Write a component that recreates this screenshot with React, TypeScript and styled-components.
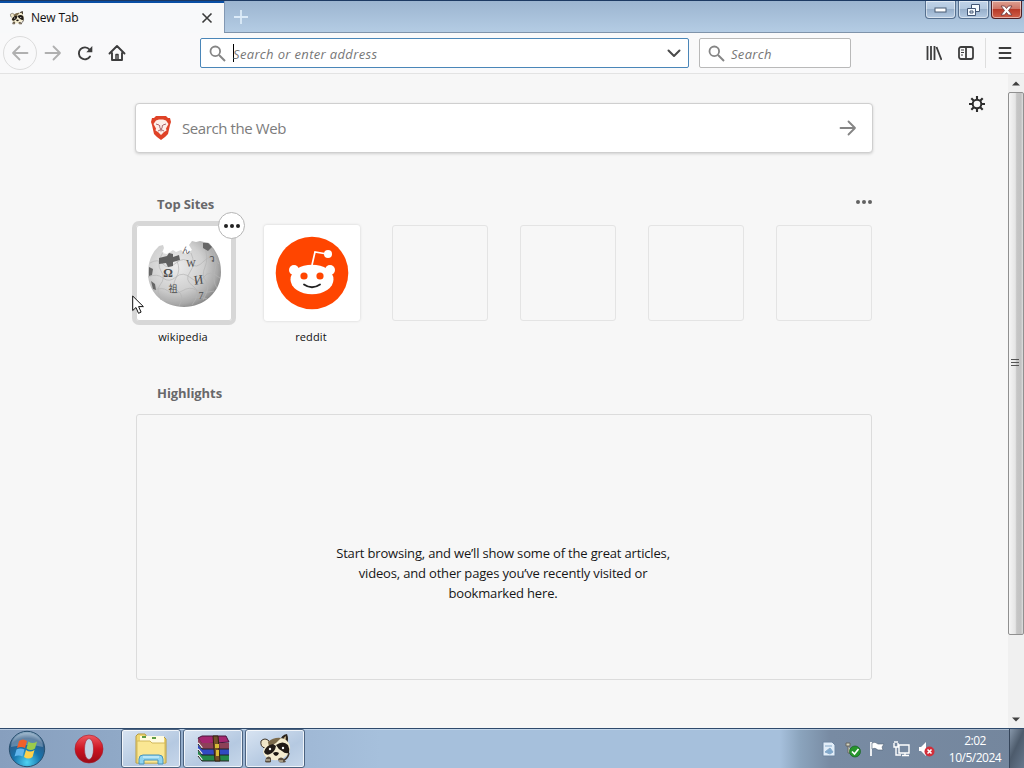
import React from 'react';
import styled, { createGlobalStyle } from 'styled-components';

const Global = createGlobalStyle`
  * { box-sizing: border-box; }
  body { margin: 0; overflow: hidden; font-family: "Open Sans", "Noto Sans", sans-serif; }
  svg { display: block; flex: none; }
`;

const Screen = styled.div`
  position: relative;
  width: 1024px;
  height: 768px;
  display: flex;
  flex-direction: column;
  background: #f7f7f7;
  overflow: hidden;
`;

const TitleBar = styled.header`
  height: 33px;
  display: flex;
  align-items: flex-start;
  background: linear-gradient(#9cb5d0, #b4cce4);
  border-top: 1px solid #1d3a63;
  border-bottom: 1px solid #7f93aa;
`;

const Tab = styled.div`
  width: 224px;
  height: 32px;
  display: flex;
  align-items: center;
  padding: 0 11px 0 9px;
  background: #f8f9fa;
  border-top: 2px solid #0a4fa5;
  color: #111;
  font-size: 12px;
`;

const TabTitle = styled.span`
  flex: 1;
  margin-left: 6px;
  letter-spacing: -0.2px;
  line-height: 16px;
`;

const NewTab = styled.div`
  width: 32px;
  height: 31px;
  display: flex;
  justify-content: center;
  align-items: center;
  border-left: 1px solid #8298b3;
`;

const WindowButtons = styled.div`
  margin-left: auto;
  margin-right: 2px;
  display: flex;
  gap: 2px;
`;

const WindowButton = styled.div<{ $close?: boolean }>`
  width: 31px;
  height: 18px;
  display: flex;
  justify-content: center;
  align-items: center;
  padding-top: 1px;
  border: 1px solid ${p => (p.$close ? '#4f1f24' : '#56708f')};
  border-top: 0;
  border-radius: 0 0 4px 4px;
  box-shadow: inset 0 0 0 1px rgba(255, 255, 255, 0.5);
  background: ${p =>
    p.$close
      ? 'linear-gradient(#dda092 0, #cf7768 45%, #b83a28 50%, #d0604a 100%)'
      : 'linear-gradient(#c0d3e8 0, #b3c8df 45%, #98b0cb 50%, #b4cae2 100%)'};
`;

const Toolbar = styled.nav`
  height: 41px;
  display: flex;
  align-items: center;
  background: #f9f9fa;
  border-bottom: 1px solid #e3e3e3;
`;

const NavGroup = styled.div`
  width: 200px;
  display: flex;
  align-items: center;
  padding-left: 3px;
`;

const BackButton = styled.div`
  width: 34px;
  height: 34px;
  display: flex;
  align-items: center;
  justify-content: center;
  border: 1px solid #dcdcdc;
  border-radius: 50%;
`;

const NavIcon = styled.div`
  width: 32px;
  display: flex;
  justify-content: center;
`;

const Field = styled.div<{ $width: number; $active?: boolean; $gap?: number }>`
  width: ${p => p.$width}px;
  height: 30px;
  margin-left: ${p => p.$gap ?? 0}px;
  display: flex;
  align-items: center;
  padding: 0 7px 0 8px;
  background: #fff;
  border: 1px solid ${p => (p.$active ? '#4a86b8' : '#b9b9b9')};
  border-radius: 2px;
  font-size: 13px;
  font-style: italic;
  color: #777;
`;

const Caret = styled.i`
  width: 1px;
  height: 18px;
  margin: 0 -1px 0 7px;
  background: #000;
`;

const FieldText = styled.span<{ $gap?: number; $spacing: number }>`
  flex: 1;
  margin-left: ${p => p.$gap ?? 0}px;
  padding-top: 2px;
  letter-spacing: ${p => p.$spacing}px;
  white-space: nowrap;
`;

const ToolGroup = styled.div`
  margin-left: auto;
  margin-right: 12px;
  display: flex;
  align-items: center;
  gap: 16px;
`;

const Divider = styled.i`
  width: 1px;
  height: 30px;
  margin: 0 -4px 0 -5px;
  background: #dedede;
`;

const Viewport = styled.div`
  height: 654px;
  display: flex;
  background: #f7f7f7;
`;

const Page = styled.main`
  width: 738px;
  margin-left: 135px;
  padding-top: 29px;
`;

const WebSearch = styled.div`
  height: 50px;
  display: flex;
  align-items: center;
  padding: 0 15px 0 14px;
  background: #fff;
  border: 1px solid #cfcfcf;
  border-radius: 4px;
  box-shadow: 0 1px 3px rgba(0, 0, 0, 0.16);
  color: #7c7c7c;
  font-size: 15px;
`;

const WebSearchText = styled.span`
  flex: 1;
  margin-left: 10px;
  letter-spacing: -0.4px;
`;

const SectionHead = styled.div<{ $top: number }>`
  height: 20px;
  margin: ${p => p.$top}px 1px 11px 22px;
  display: flex;
  justify-content: space-between;
  align-items: center;
  color: #68686a;
  font-size: 13px;
  font-weight: 700;
`;

const SectionTitle = styled.span<{ $spacing: number }>`
  letter-spacing: ${p => p.$spacing}px;
`;

const SectionMenu = styled.div`
  padding-bottom: 4px;
`;

const Sites = styled.div`
  display: flex;
  gap: 32px;
  padding-left: 1px;
`;

const Site = styled.div`
  width: 96px;
  height: 122px;
  display: flex;
  flex-direction: column;
`;

const Tile = styled.div<{ $kind: 'hover' | 'site' | 'empty' }>`
  position: relative;
  height: 96px;
  display: flex;
  align-items: center;
  justify-content: center;
  border-radius: 3px;
  background: ${p => (p.$kind === 'empty' ? 'transparent' : '#fff')};
  border: ${p => (p.$kind === 'empty' ? '1px solid #e4e4e4' : '0')};
  box-shadow: ${p =>
    p.$kind === 'hover'
      ? 'inset 0 0 0 1px #d7d7d7, 0 0 0 4px #d7d7d7'
      : p.$kind === 'site'
        ? '0 0 3px rgba(0, 0, 0, 0.16)'
        : 'none'};
`;

const MenuBadge = styled.div`
  position: absolute;
  top: -13px;
  right: -13px;
  width: 27px;
  height: 27px;
  display: flex;
  align-items: center;
  justify-content: center;
  border: 1px solid #b5b5b5;
  border-radius: 50%;
  background: #fff;
`;

const SiteName = styled.div`
  margin: 6px 2px 0 0;
  height: 20px;
  line-height: 20px;
  text-align: center;
  font-size: 11px;
  letter-spacing: 0.15px;
  color: #111;
`;

const Highlights = styled.section`
  height: 266px;
  margin: 0 1px;
  padding: 128px 190px 0;
  border: 1px solid #dcdcdc;
  border-radius: 3px;
`;

const Message = styled.p`
  margin: 0 2px 0 0;
  display: flex;
  flex-direction: column;
  align-items: center;
  white-space: nowrap;
  line-height: 20px;
  font-size: 13px;
  color: #161616;
`;

const MessageLine = styled.span`
  letter-spacing: -0.17px;
`;

const Settings = styled.div`
  margin: 22px 0 0 96px;
`;

const Scrollbar = styled.div`
  width: 16px;
  margin-left: auto;
  display: flex;
  flex-direction: column;
  background: #f0f0f0;
`;

const ScrollArrow = styled.div`
  height: 18px;
  display: flex;
  align-items: center;
  justify-content: center;
`;

const Thumb = styled.div`
  height: 543px;
  display: flex;
  align-items: center;
  justify-content: center;
  padding: 0 2px 3px 0;
  border: 1px solid #909090;
  border-radius: 2px;
  background: linear-gradient(90deg, #f5f5f5 0, #e5e5e5 45%, #c6c6c6 55%, #c2c2c2 85%, #dedede 100%);
`;

const ScrollTrack = styled.div`
  flex: 1;
`;

const Taskbar = styled.footer`
  height: 40px;
  display: flex;
  align-items: stretch;
  background: linear-gradient(90deg, #879fbe 0, #8fa8c6 110px, #a0b9d6 310px, #a6c0dc 380px, #a6c0dc 780px, #8ba4bd 800px, #788ba3 830px, #74869d 100%);
  border-top: 1px solid #2f4a6c;
  box-shadow: inset 0 1px 0 rgba(220, 235, 250, 0.55);
`;

const Launcher = styled.div<{ $width: number; $left?: number }>`
  width: ${p => p.$width}px;
  padding-left: ${p => p.$left ?? 0}px;
  display: flex;
  align-items: center;
  justify-content: center;
`;

const TaskButton = styled.div`
  width: 60px;
  margin-right: 2px;
  display: flex;
  align-items: center;
  justify-content: center;
  border: 1px solid #4c6380;
  border-radius: 3px;
  box-shadow: inset 0 0 0 1px rgba(255, 255, 255, 0.75);
  background: linear-gradient(150deg, #d8e4f2, #b5c9e1 60%, #c7d7ea);
`;

const Tray = styled.div`
  margin-left: auto;
  display: flex;
  align-items: center;
  gap: 8px;
`;

const Clock = styled.div`
  width: 56px;
  margin-left: 4px;
  margin-right: -2px;
  text-align: center;
  font-size: 12px;
  line-height: 17px;
  letter-spacing: -0.5px;
  color: #fff;
  white-space: nowrap;
`;

const ShowDesktop = styled.div`
  width: 15px;
  align-self: stretch;
  border-left: 1px solid #35455a;
  background: linear-gradient(115deg, #8797aa, #4d5b6c 45%, #67788d);
`;

const Pointer = styled.div`
  position: absolute;
  left: 132px;
  top: 295px;
`;

const Raccoon = ({ size }: { size: number }) => (
  <svg width={size} height={size} viewBox="0 0 34 34">
    <path d="M3 9q4-4 8 0l1 4-5 3q-5-1-4-7z" fill="#efe6c8" stroke="#3a3128" strokeWidth="1" />
    <path d="M22 9q1-6 7-7 2 5 0 11z" fill="#2a231c" />
    <path d="M25 8q1-3 3-4 0 3-1 6z" fill="#c9b78d" />
    <path d="M7 15q4-8 13-9 9-1 12 8 1 6-4 10-6 5-13 4-8-1-10-8 0-3 2-5z" fill="#f4eccf" />
    <path d="M10 10q6-5 13-4l-5 5-7 4z" fill="#7b6a4a" />
    <path d="M6 20q2-7 9-8l3 2q-1 6-6 8-4 2-6-2zM18 13q7-5 12 0 2 4 1 8-4 1-7-2-4-2-6-6z" fill="#211b16" />
    <circle cx="12" cy="17" r="1.200" fill="#fff" />
    <circle cx="25" cy="16" r="1.200" fill="#fff" />
    <path d="M15 21q3-2 6 0-1 3-3 3t-3-3z" fill="#1c1713" />
    <path d="M31 21q-1 5-5 7" stroke="#40362a" strokeWidth="1.500" fill="none" />
    <path d="M8 26q3-3 5 0v4q-3 1-6 0zM20 27q3-3 6 0l2 3q-4 1-7 0z" fill="#5a4e3f" />
    <path d="M9 29v-2M11 29v-2M22 30v-2M24 30v-2" stroke="#e8dec0" />
  </svg>
);

const SearchIcon = () => (
  <svg width="17" height="17" viewBox="0 0 17 17" fill="none" stroke="#858585" strokeWidth="2">
    <circle cx="6.3" cy="6.3" r="4.8" strokeWidth="1.8" />
    <path d="M10 10l6 6" />
  </svg>
);

const Arrow = ({ size, color, back }: { size: number; color: string; back?: boolean }) => (
  <svg width={size} height={size} viewBox="0 0 18 18" fill="none" stroke={color} strokeWidth="1.8" strokeLinecap="round" strokeLinejoin="round">
    <path d={back ? 'M16.5 9H2M8.5 2.5L2 9l6.5 6.5' : 'M1.5 9H16M9.5 2.5L16 9l-6.5 6.5'} />
  </svg>
);

const Dots = ({ width, r, color }: { width: number; r: number; color: string }) => (
  <svg width={width} height="6" viewBox={`0 0 ${width} 6`} fill={color}>
    <circle cx={r} cy="3" r={r} />
    <circle cx={width / 2} cy="3" r={r} />
    <circle cx={width - r} cy="3" r={r} />
  </svg>
);

const BraveLion = () => (
  <svg width="22" height="26" viewBox="0 0 22 26">
    <path d="M6 1h10l2 2h2l1 4-1 3-2 9-3 3-4 3-4-3-3-3-2-9-1-3 1-4h2z" fill="#df4227" />
    <path d="M6 5.500l3-1h4l3 1 2.500 3.500-2.500 4.500.5 2-2.500 1.500-3 3-3-3L5.500 15.500l.5-2L3.500 9z" fill="#fdeee8" />
    <path d="M6 9l3 1M16 9l-3 1M9.500 10l.5 3 1 1.500 1-1.500.5-3M8 16l3-1.500 3 1.500M11 14.500v2" fill="none" stroke="#a9656b" strokeWidth="1" />
  </svg>
);

const Wikipedia = () => (
  <svg width="96" height="96" viewBox="0 0 96 96">
    <defs>
      <radialGradient id="globe" cx="38%" cy="38%" r="68%">
        <stop offset="0" stopColor="#ececec" />
        <stop offset="0.55" stopColor="#d0d0d0" />
        <stop offset="0.85" stopColor="#a8a8a8" />
        <stop offset="1" stopColor="#808080" />
      </radialGradient>
    </defs>
    <path d="M23 21q-11 10-11 27c0 20 16 34 36 34s37-15 37-35q0-17-12-29l-5-1-4-1-4 1-4-1-3 4 3 5-6 4-5-4-5 2-3-2-6 4-5-1 2-5-1-3z" fill="url(#globe)" />
    <g fill="none" stroke="#b5b5b5" strokeWidth="0.7">
      <path d="M14 38q8-5 13 1t13-1 14 0 14-2 15 3M12 52q9-4 15 1t13-1 15 1 13-1 16 1M17 66q9-5 15 0t14 0 14-1 18 1M24 74q12 4 24 0t23 0" />
      <path d="M27 27q-7 12-2 19t-1 14 5 17M41 36q4 9-1 17t2 13 1 15M55 28q5 11-1 19t3 14-1 19M68 20q5 13 1 22t1 14-3 19M76 24q6 10 3 21t2 18" />
    </g>
    <path d="M23 33l8-2 2-3 4 1v3l6-2 1 5-7 2v4l-5 1-2-4-7 1z" fill="#606060" />
    <path d="M67 18l5 0 4 4-4 4-5-3zM13 42l4 2-1 6-3 1zM15 56l4 3 1 6-3-1z" fill="#666" />
    <g fill="#4a4a4a" fontFamily="Liberation Serif, Noto Sans CJK JP, serif" fontWeight="bold" textAnchor="middle">
      <text x="32" y="52" fontSize="12">Ω</text>
      <text x="55" y="42" fontSize="10" fontWeight="normal">W</text>
      <text x="63" y="59" fontSize="13" fontWeight="normal" transform="rotate(-8 63 57)">И</text>
      <text x="37" y="67" fontSize="9" fontWeight="normal">祖</text>
      <text x="76" y="37" fontSize="10" fontWeight="normal">ว</text>
      <text x="65" y="74" fontSize="10" fontWeight="normal">7</text>
      <text x="50" y="28" fontSize="8" fontWeight="normal">ん</text>
    </g>
  </svg>
);

const Reddit = () => (
  <svg width="74" height="74" viewBox="0 0 74 74">
    <circle cx="37" cy="37" r="36.300" fill="#ff4500" />
    <path d="M37 29l3-13 12 2" fill="none" stroke="#fff" strokeWidth="1.700" />
    <circle cx="53" cy="18" r="4" fill="#fff" />
    <circle cx="19" cy="34" r="5" fill="#fff" />
    <circle cx="55" cy="34" r="5" fill="#fff" />
    <ellipse cx="37" cy="43.500" rx="21.500" ry="14.800" fill="#fff" />
    <circle cx="29" cy="40" r="3.600" fill="#ff4500" />
    <circle cx="45" cy="40" r="3.600" fill="#ff4500" />
    <path d="M29 48.500q8 5.500 16 0" fill="none" stroke="#222" strokeWidth="1.800" strokeLinecap="round" />
  </svg>
);

const StartOrb = () => (
  <svg width="38" height="38" viewBox="0 0 38 38">
    <defs>
      <radialGradient id="orb" cx="50%" cy="88%" r="85%">
        <stop offset="0" stopColor="#4fd3f2" />
        <stop offset="0.45" stopColor="#1775ae" />
        <stop offset="0.8" stopColor="#2e5a86" />
        <stop offset="1" stopColor="#8cabc4" />
      </radialGradient>
    </defs>
    <circle cx="19" cy="19" r="17.700" fill="url(#orb)" stroke="#29506f" />
    <path d="M3 17a16 14 0 0 1 32 0q-15-4-32 0z" fill="#fff" opacity="0.25" />
    <path d="M11 11q4-3 8 0l-2 7q-4-2-8 0z" fill="#f0602b" />
    <path d="M20.500 11.500q4 3 8.500 0l-2 7q-4 3-8.500 0z" fill="#9acb4c" />
    <path d="M8.500 19.500q4-2 8 0l-2 7q-4-2-8 0z" fill="#61b5ec" />
    <path d="M18 20q4 3 8.500 0l-2 7q-4 3-8.500 0z" fill="#ffd14a" />
  </svg>
);

const Opera = () => (
  <svg width="30" height="30" viewBox="0 0 30 30">
    <defs>
      <linearGradient id="opera" x2="0" y2="1">
        <stop stopColor="#ef5960" />
        <stop offset="0.5" stopColor="#cc1421" />
        <stop offset="1" stopColor="#9a0b17" />
      </linearGradient>
    </defs>
    <ellipse cx="15" cy="15" rx="5" ry="11" fill="#c3d2e4" />
    <path fillRule="evenodd" d="M15 1a14 14 0 1 0 0 28 14 14 0 1 0 0-28zM15 4.500c6 0 6 21 0 21s-6-21 0-21z" fill="url(#opera)" stroke="#a51b28" strokeWidth="0.600" />
  </svg>
);

const Explorer = () => (
  <svg width="34" height="32" viewBox="0 0 34 32">
    <path d="M2 3l2-2h7l2 3h17l2 2v24H2z" fill="#efd873" stroke="#b79b43" />
    <path d="M6 3h24v7H6z" fill="#fffbe1" />
    <path d="M8 3h4v2H8zM18 4h4v2h-4z" fill="#5f9c46" />
    <path d="M3 8h13l2 2h13v20H3z" fill="#fae793" stroke="#d2b95c" />
    <path d="M5 31v-5q0-4 4-4h16q4 0 4 4v5h-5v-4H10v4z" fill="#8fd4ef" stroke="#4993bb" />
    <path d="M9 24h16" stroke="#e6faff" />
  </svg>
);

const Archive = () => (
  <svg width="34" height="28" viewBox="0 0 34 28">
    <path d="M2 3l4-2h24l3 6-27 2z" fill="#a42770" stroke="#46173b" />
    <path d="M6 8h27v6H6zM2 3l4 5v6L2 9z" fill="#8d4058" />
    <path d="M6 14h27v6H6zM2 9l4 5v6l-4-5z" fill="#314ac1" />
    <path d="M6 20h27v6H6zM2 15l4 5v6l-4-5z" fill="#248849" />
    <path d="M2 8l4 5M2 14l4 5M2 20l4 5" stroke="#eee" strokeWidth="2" fill="none" />
    <path d="M2 9l4 5h27M2 15l4 5h27M2 21l4 5h27" stroke="#222" fill="none" />
    <path d="M17 1h5l2 25h-5z" fill="#74502a" stroke="#33230f" />
    <path d="M19 9h4v4h-4zM20 15h3v6h-3z" fill="#d9bb35" />
  </svg>
);

const siteList: { name: string; kind: 'hover' | 'site' | 'empty' }[] = [
  { name: 'wikipedia', kind: 'hover' },
  { name: 'reddit', kind: 'site' },
  { name: '', kind: 'empty' },
  { name: '', kind: 'empty' },
  { name: '', kind: 'empty' },
  { name: '', kind: 'empty' },
];

export default function App() {
  return (
    <Screen>
      <Global />
      <TitleBar>
        <Tab>
          <Raccoon size={16} />
          <TabTitle>New Tab</TabTitle>
          <svg width="12" height="12" viewBox="0 0 12 12" stroke="#3b3b3b" strokeWidth="1.6">
            <path d="M1.500 1.500l9 9M10.500 1.500l-9 9" />
          </svg>
        </Tab>
        <NewTab>
          <svg width="14" height="14" viewBox="0 0 14 14" stroke="#dcebf8" strokeWidth="1.8">
            <path d="M7 0v14M0 7h14" />
          </svg>
        </NewTab>
        <WindowButtons>
          <WindowButton>
            <svg width="13" height="6" viewBox="0 0 13 6"><rect x="1" y="1" width="11" height="4" fill="#fff" stroke="#4a5c75" /></svg>
          </WindowButton>
          <WindowButton>
            <svg width="13" height="12" viewBox="0 0 13 12" fill="#f6fbff" stroke="#445876">
              <path d="M4.500.5h8v7h-8z" /><path d="M.5 4.500h8v7h-8zM3 7h3v2H3z" />
            </svg>
          </WindowButton>
          <WindowButton $close>
            <svg width="13" height="11" viewBox="0 0 13 11">
              <path d="M1 1h3.500l2 2.500L8.500 1H12L8.500 5.500 12 10H8.500l-2-2.500-2 2.500H1l3.500-4.500z" fill="#fff" stroke="#64333a" strokeWidth="0.800" />
            </svg>
          </WindowButton>
        </WindowButtons>
      </TitleBar>
      <Toolbar>
        <NavGroup>
          <BackButton><Arrow size={18} color="#b0b0b0" back /></BackButton>
          <NavIcon><Arrow size={18} color="#b0b0b0" /></NavIcon>
          <NavIcon>
            <svg width="18" height="18" viewBox="0 0 18 18">
              <path d="M14 12.500A6 6 0 1 1 13.500 5.500" fill="none" stroke="#3d3d3d" strokeWidth="1.900" strokeLinecap="round" />
              <path d="M16.300 2v6.200H10.300z" fill="#3d3d3d" />
            </svg>
          </NavIcon>
          <NavIcon>
            <svg width="18" height="18" viewBox="0 0 18 18" fill="none" stroke="#3d3d3d" strokeWidth="1.900" strokeLinecap="round" strokeLinejoin="round">
              <path d="M1.500 9.500L9 2l7.500 7.500M4 9v7h10V9" /><path d="M8 15.500V10.500h2v5" strokeWidth="1.500" />
            </svg>
          </NavIcon>
        </NavGroup>
        <Field $width={489} $active>
          <SearchIcon />
          <Caret />
          <FieldText $spacing={0.34}>Search or enter address</FieldText>
          <svg width="14" height="14" viewBox="0 0 14 14" fill="none" stroke="#4a4a4a" strokeWidth="2" strokeLinecap="round" strokeLinejoin="round">
            <path d="M1.500 4.500L7 10l5.500-5.500" />
          </svg>
        </Field>
        <Field $width={152} $gap={10}>
          <SearchIcon />
          <FieldText $gap={6} $spacing={0.3}>Search</FieldText>
        </Field>
        <ToolGroup>
          <svg width="16" height="16" viewBox="0 0 16 16" fill="none" stroke="#3d3d3d" strokeWidth="1.800">
            <path d="M1.500 1v14M5 1v14M8.500 1v14M10.500 2l5 13" />
          </svg>
          <svg width="16" height="16" viewBox="0 0 16 16" fill="none" stroke="#3d3d3d" strokeWidth="1.800">
            <rect x="1" y="2" width="14" height="12" rx="2" /><path d="M8 2v12" /><path d="M3 5h3M3 7.500h3M3 10h2" strokeWidth="1" />
          </svg>
          <Divider />
          <svg width="14" height="14" viewBox="0 0 14 14" stroke="#3d3d3d" strokeWidth="1.800" strokeLinecap="round">
            <path d="M1.500 2h11M1.500 7h11M1.500 12h11" />
          </svg>
        </ToolGroup>
      </Toolbar>
      <Viewport>
        <Page>
          <WebSearch>
            <BraveLion />
            <WebSearchText>Search the Web</WebSearchText>
            <Arrow size={18} color="#858585" />
          </WebSearch>
          <SectionHead $top={41}>
            <SectionTitle $spacing={-0.1}>Top Sites</SectionTitle>
            <SectionMenu><Dots width={16} r={2} color="#626262" /></SectionMenu>
          </SectionHead>
          <Sites>
            {siteList.map((site, i) => (
              <Site key={i}>
                <Tile $kind={site.kind}>
                  {site.name === 'wikipedia' && <Wikipedia />}
                  {site.name === 'reddit' && <Reddit />}
                  {site.kind === 'hover' && <MenuBadge><Dots width={16} r={2} color="#222" /></MenuBadge>}
                </Tile>
                <SiteName>{site.name}</SiteName>
              </Site>
            ))}
          </Sites>
          <SectionHead $top={36}>
            <SectionTitle $spacing={-0.07}>Highlights</SectionTitle>
          </SectionHead>
          <Highlights>
            <Message>
              <MessageLine>Start browsing, and we’ll show some of the great articles,</MessageLine>
              <MessageLine>videos, and other pages you’ve recently visited or</MessageLine>
              <MessageLine>bookmarked here.</MessageLine>
            </Message>
          </Highlights>
        </Page>
        <Settings>
          <svg width="16" height="16" viewBox="0 0 16 16" fill="none" stroke="#2d2d2d">
            <circle cx="8" cy="8" r="4.300" strokeWidth="2" />
            <path d="M8 0v3.500M8 12.500V16M0 8h3.500M12.500 8H16M2.300 2.300l2.500 2.500M11.200 11.200l2.500 2.500M13.700 2.300l-2.500 2.500M4.800 11.200l-2.500 2.500" strokeWidth="2.100" />
          </svg>
        </Settings>
        <Scrollbar>
          <ScrollArrow><svg width="8" height="5" viewBox="0 0 8 5"><path d="M0 4.500L4 .5l4 4z" fill="#404040" /></svg></ScrollArrow>
          <Thumb><svg width="8" height="8" viewBox="0 0 8 8" stroke="#555"><path d="M0 1.500h8M0 4.500h8M0 7.500h8" /></svg></Thumb>
          <ScrollTrack />
          <ScrollArrow><svg width="8" height="5" viewBox="0 0 8 5"><path d="M0 .5l4 4 4-4z" fill="#404040" /></svg></ScrollArrow>
        </Scrollbar>
      </Viewport>
      <Taskbar>
        <Launcher $width={54}><StartOrb /></Launcher>
        <Launcher $width={67} $left={2}><Opera /></Launcher>
        <TaskButton><Explorer /></TaskButton>
        <TaskButton><Archive /></TaskButton>
        <TaskButton><Raccoon size={34} /></TaskButton>
        <Tray>
          <svg width="16" height="18" viewBox="0 0 16 18">
            <path d="M2 2h9l3 3v11H2z" fill="#e2edf8" stroke="#6e86a1" /><path d="M4 6h7M4 12l5-4 3 4-3 2z" fill="#7fa8cc" stroke="#86a9c9" />
          </svg>
          <svg width="16" height="18" viewBox="0 0 16 18">
            <path d="M1 3h4v3H1zM3 6v7h5" fill="#d5d6c1" stroke="#686763" /><circle cx="10" cy="11.500" r="5.500" fill="#26962c" stroke="#176122" strokeWidth="0.700" /><path d="M7 11.500l2.500 2.500 4-5" fill="none" stroke="#fff" strokeWidth="1.700" />
          </svg>
          <svg width="16" height="18" viewBox="0 0 16 18">
            <path d="M2 2v14" stroke="#fff" strokeWidth="1.700" /><path d="M3 3q3-2 6 1h6l-2 3 1 3H9q-3-3-6-1z" fill="#fff" stroke="#536276" strokeWidth="0.600" />
          </svg>
          <svg width="17" height="18" viewBox="0 0 17 18" fill="none" stroke="#fff" strokeWidth="1.400">
            <path d="M6 5h10v8H6zM9 15.500h7M12 13v2M1 3v4h4V3M3 7v8h5M2 1v2M4 1v2" />
          </svg>
          <svg width="17" height="18" viewBox="0 0 17 18">
            <path d="M1 7h2l5-5v14l-5-5H1z" fill="#fff" /><circle cx="11.500" cy="11.500" r="5" fill="#d22e3a" /><path d="M9.500 9.500l4 4M13.500 9.500l-4 4" stroke="#fff" strokeWidth="1.600" />
          </svg>
          <Clock>2:02<br />10/5/2024</Clock>
          <ShowDesktop />
        </Tray>
      </Taskbar>
      <Pointer>
        <svg width="13" height="20" viewBox="0 0 13 20"><path d="M.7 1v14.500l3.300-3 2.500 5.800 2.600-1.200-2.500-5.500h4.800z" fill="#fff" stroke="#111" /></svg>
      </Pointer>
    </Screen>
  );
}
